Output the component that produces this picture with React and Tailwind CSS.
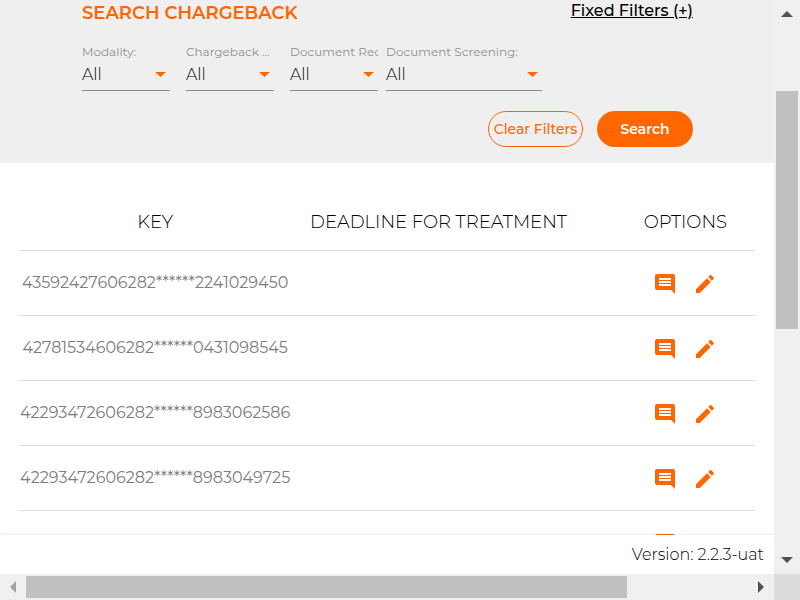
import React from "react";

const filters = [
  { id: "modality", label: "Modality:", box: "w-[88px] mr-4" },
  { id: "chargeback", label: "Chargeback ...", box: "w-[88px] mr-4" },
  { id: "document", label: "Document Rec", box: "w-[88px] mr-2" },
  { id: "screening", label: "Document Screening:", box: "w-[156px]" },
];

const keys = [
  "43592427606282******2241029450",
  "42781534606282******0431098545",
  "42293472606282******8983062586",
  "42293472606282******8983049725",
  "",
];

function Filter({ id, label, box }) {
  return (
    <div className={`shrink-0 ${box}`}>
      <label
        htmlFor={id}
        className="block overflow-hidden text-xs leading-[18px] font-normal whitespace-nowrap text-[#8f8f8f]"
      >
        {label}
      </label>
      <div className="flex items-center border-b border-[#8a8a8a] pt-0.5 pb-[3px]">
        <select
          id={id}
          className="h-6 min-w-0 flex-1 appearance-none bg-transparent text-base font-light text-black outline-none"
        >
          <option>All</option>
        </select>
        <svg className="mr-1 mb-0.5 h-[5px] w-[11px] shrink-0" viewBox="0 0 10 5" preserveAspectRatio="none" fill="#ff6600" aria-hidden="true">
          <path d="M0 0h10L5 5z" />
        </svg>
      </div>
    </div>
  );
}

function IconButton({ label, d }) {
  return (
    <button type="button" aria-label={label} className="h-6 w-6">
      <svg viewBox="0 0 24 24" className="h-6 w-6" fill="#ff6600">
        <path d={d} />
      </svg>
    </button>
  );
}

const commentPath =
  "M21.99 4c0-1.1-.89-2-1.99-2H4c-1.1 0-2 .9-2 2v12c0 1.1.9 2 2 2h14l4 4-.01-18zM18 14H6v-2h12v2zm0-3H6V9h12v2zm0-3H6V6h12v2z";
const editPath =
  "M3 17.25V21h3.75L17.81 9.94l-3.75-3.75L3 17.25zM20.71 7.04c.39-.39.39-1.02 0-1.41l-2.34-2.34c-.39-.39-1.02-.39-1.41 0l-1.83 1.83 3.75 3.75 1.83-1.83z";

function Arrow({ d, className, fill }) {
  return (
    <svg viewBox="0 0 12 12" className={`h-3 w-3 shrink-0 ${className}`} fill={fill} aria-hidden="true">
      <path d={d} />
    </svg>
  );
}

export default function App() {
  return (
    <div className="grid h-screen grid-cols-[minmax(0,1fr)_26px] grid-rows-[minmax(0,1fr)_26px] bg-white font-['Montserrat','Inter',sans-serif]">
      <div className="flex min-h-0 flex-col">
        <main className="min-h-0 flex-1 overflow-hidden">
          <section className="bg-[#efefef] pr-[81px] pb-4 pl-[82px]">
            <div className="flex items-start justify-between">
              <h1 className="pt-px text-lg leading-6 font-semibold text-[#ff6600]">SEARCH CHARGEBACK</h1>
              <a href="#filters" className="text-base leading-[22px] font-medium text-black underline">
                Fixed Filters (+)
              </a>
            </div>
            <div className="flex pt-[18px]">
              {filters.map((f) => (
                <Filter key={f.id} {...f} />
              ))}
            </div>
            <div className="flex justify-end gap-[14px] pt-5">
              <button
                type="button"
                className="h-9 w-[95px] rounded-full border border-[#ff6600] text-sm font-medium whitespace-nowrap text-[#ff6600]"
              >
                Clear Filters
              </button>
              <button type="button" className="h-9 w-24 rounded-full bg-[#ff6600] text-sm font-semibold text-white">
                Search
              </button>
            </div>
          </section>

          <section className="px-[19px] pt-[30px]">
            <table className="w-full table-fixed border-collapse">
              <colgroup>
                <col className="w-[37%]" />
                <col className="w-[40%]" />
                <col />
              </colgroup>
              <thead>
                <tr className="h-[57px] border-b border-[#dddddd] text-lg text-black">
                  <th className="pt-0.5 font-light">KEY</th>
                  <th className="pt-0.5 font-light">DEADLINE FOR TREATMENT</th>
                  <th className="pt-0.5 pl-[30px] font-light">OPTIONS</th>
                </tr>
              </thead>
              <tbody>
                {keys.map((k, i) => (
                  <tr key={i} className="h-[65px] border-b border-[#dddddd]">
                    <td className="text-center text-base font-normal text-[#7d7d7d]">{k}</td>
                    <td />
                    <td className="pt-0.5 pl-[30px]">
                      <div className="flex justify-center gap-4">
                        <IconButton label="Comments" d={commentPath} />
                        <IconButton label="Edit" d={editPath} />
                      </div>
                    </td>
                  </tr>
                ))}
              </tbody>
            </table>
          </section>
        </main>
        <footer className="z-10 flex h-[39px] shrink-0 items-center justify-end bg-white pr-[10px] text-base font-light text-black shadow-[0_0_3px_rgba(0,0,0,0.15)]">
          Version: 2.2.3-uat
        </footer>
      </div>

      <div className="z-20 flex flex-col items-center bg-[#f0f0f0]">
        <Arrow className="mt-2" d="M0 9h12L6 3z" fill="#505050" />
        <div className="mt-[71px] h-[238px] w-[22px] bg-[#c0c0c0]" />
        <Arrow className="mt-auto mb-2" d="M0 3h12L6 9z" fill="#505050" />
      </div>
      <div className="z-20 flex items-center bg-[#f0f0f0]">
        <Arrow className="ml-[7px]" d="M9 0v12L3 6z" fill="#a3a3a3" />
        <div className="ml-[7px] h-[22px] w-[601px] bg-[#c0c0c0]" />
        <Arrow className="mr-[7px] ml-auto" d="M3 0v12l6-6z" fill="#505050" />
      </div>
      <div className="z-20 bg-[#dcdcdc]" />
    </div>
  );
}
